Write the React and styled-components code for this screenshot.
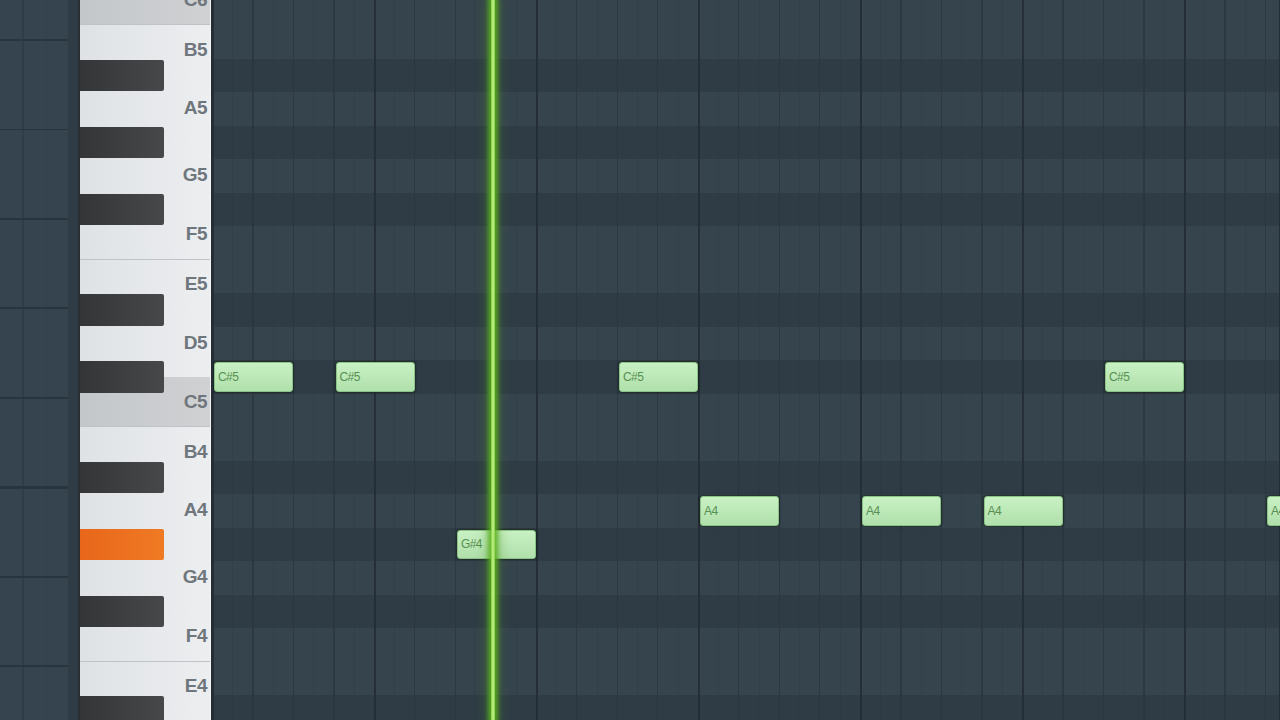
import React from "react";
import styled, { createGlobalStyle } from "styled-components";

const ROW = 33.5;
const STEP = 40.5;

const GlobalStyle = createGlobalStyle`
  html, body {
    margin: 0;
    padding: 0;
    background: #34424d;
    overflow: hidden;
  }
  body {
    font-family: "Liberation Sans", Arial, sans-serif;
  }
`;

// white keys, top to bottom, in semitones of height
const whiteKeys = [
  { name: "C6", size: 1.5, c: true },
  { name: "B5", size: 1.5 },
  { name: "A5", size: 2 },
  { name: "G5", size: 2 },
  { name: "F5", size: 1.5 },
  { name: "E5", size: 1.5 },
  { name: "D5", size: 2 },
  { name: "C5", size: 1.5, c: true },
  { name: "B4", size: 1.5 },
  { name: "A4", size: 2 },
  { name: "G4", size: 2 },
  { name: "F4", size: 1.5 },
  { name: "E4", size: 1.5 },
];

// rows of the roll, top to bottom (C6 first)
const rows = [
  "C6", "B5", "A#5", "A5", "G#5", "G5", "F#5", "F5", "E5", "D#5", "D5",
  "C#5", "C5", "B4", "A#4", "A4", "G#4", "G4", "F#4", "F4", "E4", "D#4", "D4",
];

const notes = [
  { pitch: "C#5", step: 0 },
  { pitch: "C#5", step: 3 },
  { pitch: "C#5", step: 10 },
  { pitch: "C#5", step: 22 },
  { pitch: "G#4", step: 6 },
  { pitch: "A4", step: 12 },
  { pitch: "A4", step: 16 },
  { pitch: "A4", step: 19 },
  { pitch: "A4", step: 26 },
];

const Screen = styled.div`
  display: flex;
  width: 1280px;
  height: 720px;
  overflow: hidden;
`;

const SidePanel = styled.div`
  width: 68px;
  height: 100%;
  background-color: #36444f;
  background-image:
    repeating-linear-gradient(to bottom, transparent 0 39px, #29353e 39px 41px, transparent 41px 89.5px),
    linear-gradient(to right, transparent 0 22px, #303d47 22px 24px, transparent 24px 46px, #34414b 46px 47px, transparent 47px);
`;

const Gutter = styled.div`
  width: 10px;
  height: 100%;
  background: #2f3b45;
  border-right: 2px solid #2a2e31;
`;

const Keyboard = styled.div`
  position: relative;
  width: 130px;
  height: 100%;
  overflow: hidden;
  background: linear-gradient(to right, #dfe2e5, #eceef0);
  border-right: 1px solid #f2f3f4;
`;

const WhiteColumn = styled.div`
  display: flex;
  flex-direction: column;
  margin-top: -${ROW * 0.75}px;
`;

const WhiteKey = styled.div`
  flex: none;
  box-sizing: border-box;
  height: ${(p) => p.$size * ROW}px;
  display: flex;
  align-items: center;
  justify-content: flex-end;
  padding-right: 3px;
  background: ${(p) =>
    p.$c
      ? "linear-gradient(to right, #c4c7ca, #cfd1d3)"
      : "linear-gradient(to right, #dfe2e5, #eceef0)"};
  border-bottom: 1px solid ${(p) => (p.$edge ? "#bfc3c7" : "transparent")};
  font-size: 19px;
  font-weight: bold;
  color: #6f767c;
  letter-spacing: -0.5px;
`;

const BlackKey = styled.div`
  position: absolute;
  left: 0;
  width: 84px;
  height: ${ROW - 2}px;
  background: ${(p) =>
    p.$lit
      ? "linear-gradient(to right, #e8661a, #f07a24)"
      : "linear-gradient(to right, #333537, #46484a)"};
  border-radius: 0 2px 2px 0;
`;

const Roll = styled.div`
  position: relative;
  flex: 1;
  height: 100%;
  overflow: hidden;
  border-left: 2px solid #242d33;
`;

const RowStack = styled.div`
  display: flex;
  flex-direction: column;
  margin-top: -${ROW / 4}px;
`;

const RollRow = styled.div`
  flex: none;
  height: ${ROW}px;
  background: ${(p) => (p.$dark ? "#2f3c46" : "#36444e")};
`;

const GridLines = styled.div`
  position: absolute;
  inset: 0;
  pointer-events: none;
  background-image:
    repeating-linear-gradient(to right, rgba(34, 44, 52, 0.85) 0 2px, transparent 2px ${STEP * 4}px),
    repeating-linear-gradient(to right, rgba(40, 52, 61, 0.6) 0 1px, transparent 1px ${STEP}px),
    repeating-linear-gradient(to right, rgba(40, 52, 61, 0.25) 0 1px, transparent 1px ${STEP / 2}px);
  background-position: -1px 0, -1px 0, -1px 0;
`;

const Note = styled.div`
  position: absolute;
  box-sizing: border-box;
  width: 79px;
  height: ${ROW - 4}px;
  padding-left: 3px;
  display: flex;
  align-items: center;
  background: linear-gradient(to bottom, #c9f1c4, #b0e0ab);
  border: 1px solid #8cc386;
  border-radius: 3px;
  box-shadow: 0 0 2px 1px rgba(20, 30, 20, 0.55);
  font-size: 12px;
  color: #588f53;
  letter-spacing: -0.6px;
`;

const Playhead = styled.div`
  position: absolute;
  top: 0;
  bottom: 0;
  left: 278px;
  width: 4px;
  background: linear-gradient(to right, #7cd03c, #c8f290, #7cd03c);
  box-shadow: 0 0 4px 3px rgba(92, 176, 30, 0.85), 0 0 12px 5px rgba(70, 140, 30, 0.35);
`;

export default function App() {
  const rowTop = (name) => rows.indexOf(name) * ROW - ROW / 4;

  return (
    <>
      <GlobalStyle />
      <Screen>
        <SidePanel />
        <Gutter />
        <Keyboard>
          <WhiteColumn>
            {whiteKeys.map((k) => (
              <WhiteKey
                key={k.name}
                $size={k.size}
                $c={k.c}
                $edge={k.name.startsWith("C") || k.name.startsWith("F")}
              >
                {k.name}
              </WhiteKey>
            ))}
          </WhiteColumn>
          {rows
            .filter((r) => r.includes("#"))
            .map((r) => (
              <BlackKey key={r} $lit={r === "G#4"} style={{ top: rowTop(r) + 1 }} />
            ))}
        </Keyboard>
        <Roll>
          <RowStack>
            {rows.map((r) => (
              <RollRow key={r} $dark={r.includes("#")} />
            ))}
          </RowStack>
          <GridLines />
          {notes.map((n, i) => (
            <Note key={i} style={{ top: rowTop(n.pitch) + 2, left: n.step * STEP + 1 }}>
              {n.pitch}
            </Note>
          ))}
          <Playhead />
        </Roll>
      </Screen>
    </>
  );
}
